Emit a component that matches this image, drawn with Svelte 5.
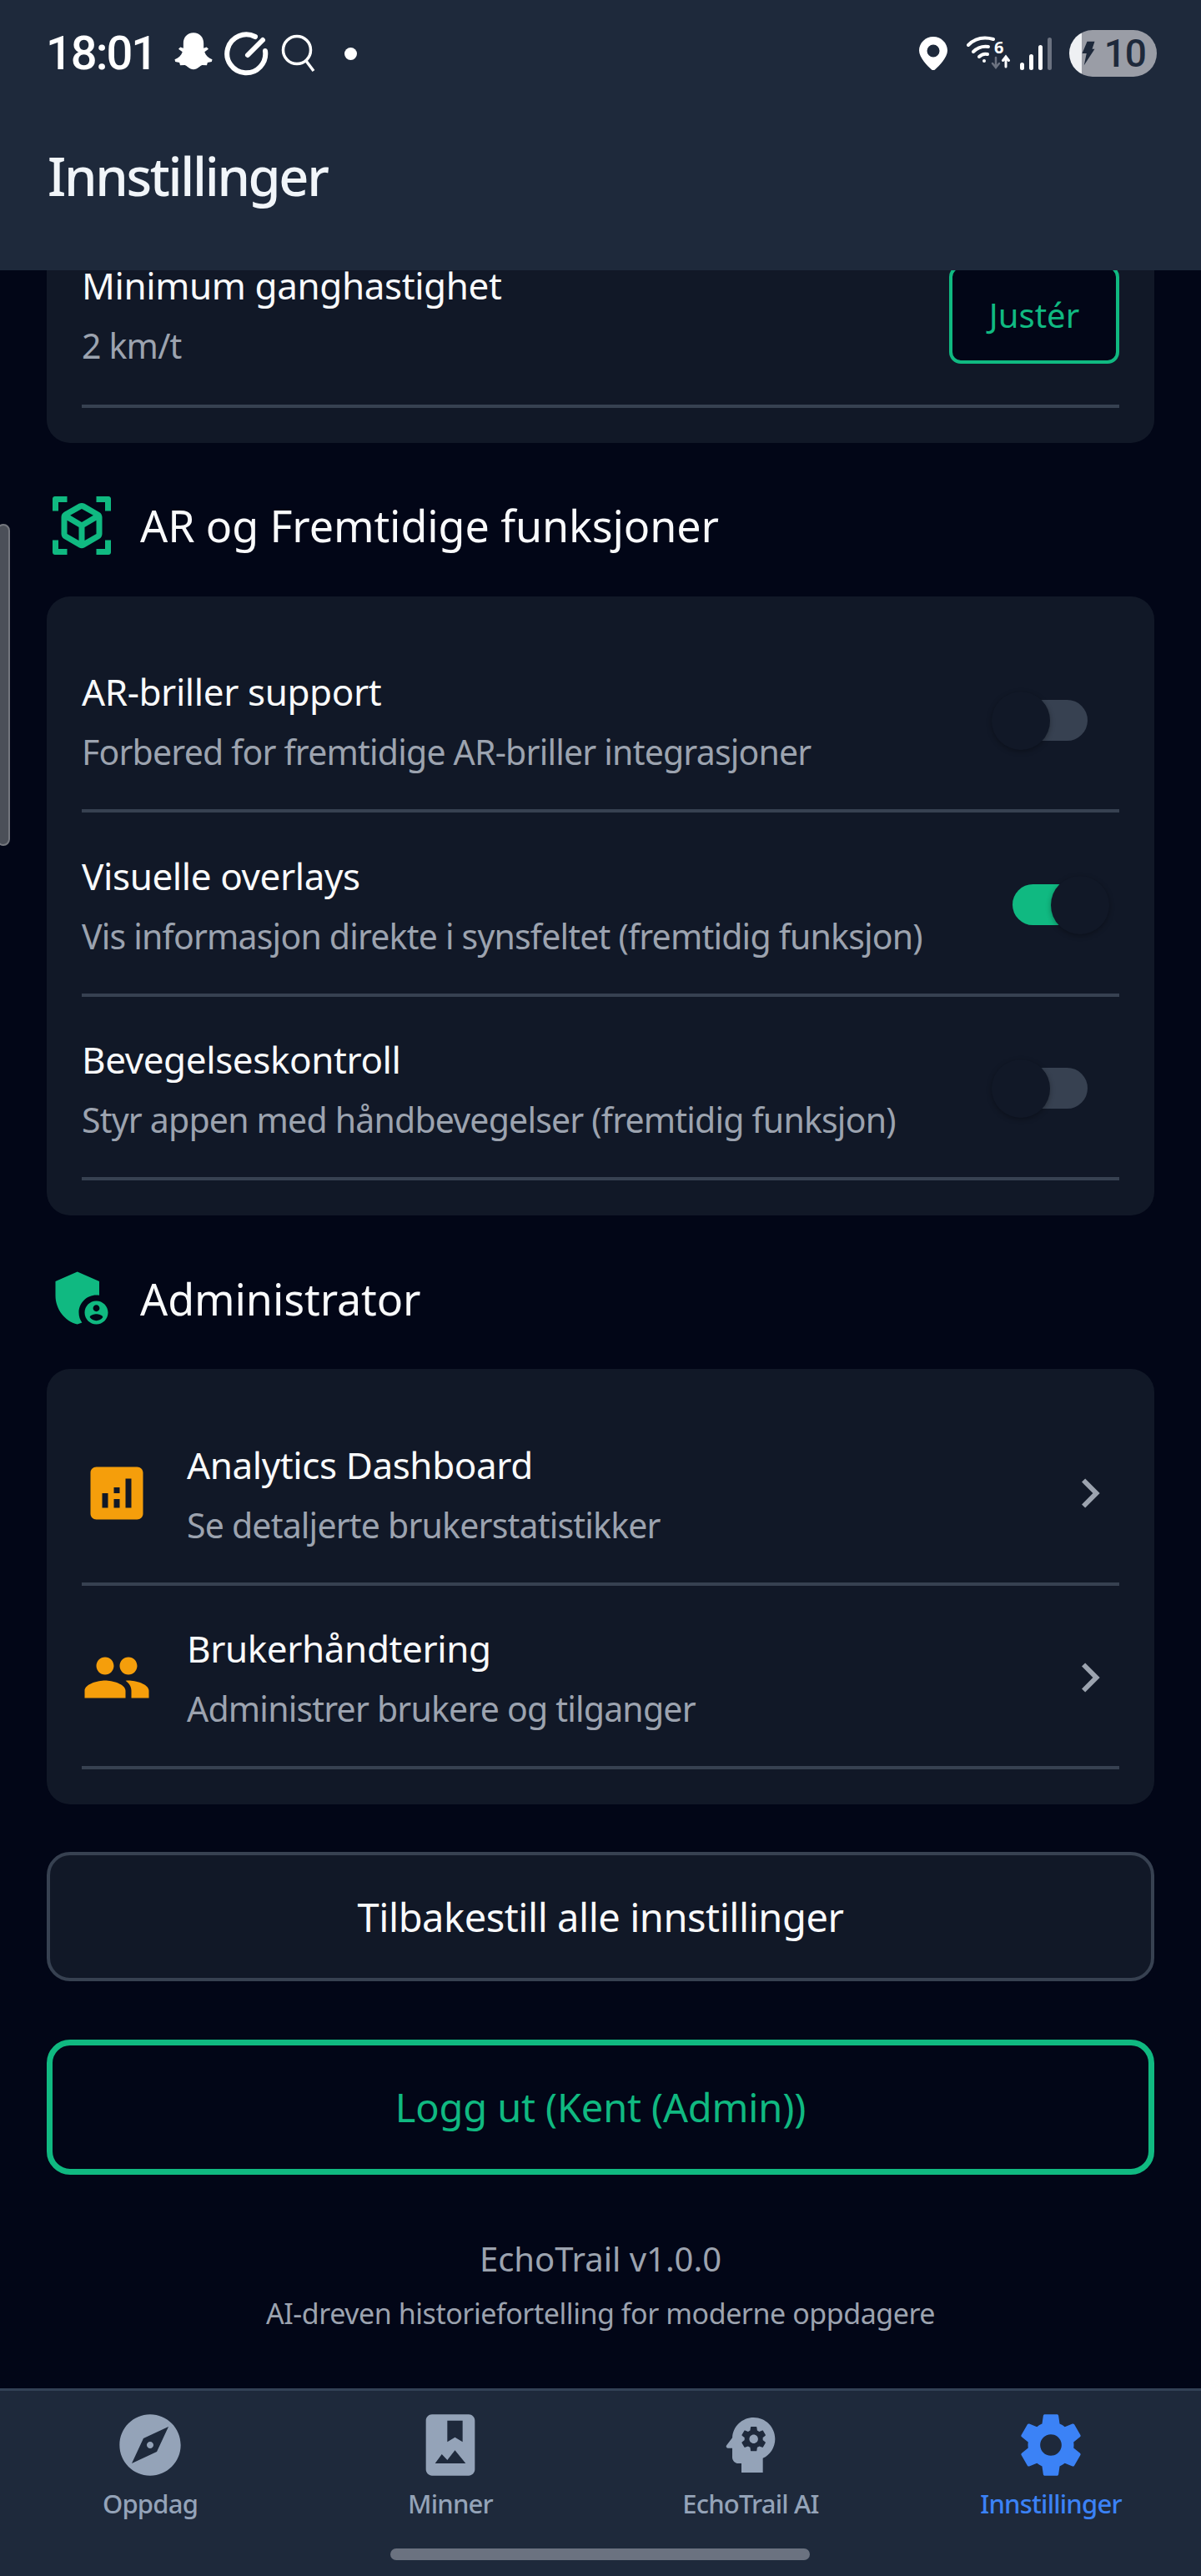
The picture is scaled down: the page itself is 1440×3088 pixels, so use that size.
<script>
    const arRows = [
        { title: 'AR-briller support', sub: 'Forbered for fremtidige AR-briller integrasjoner', on: false },
        { title: 'Visuelle overlays', sub: 'Vis informasjon direkte i synsfeltet (fremtidig funksjon)', on: true },
        { title: 'Bevegelseskontroll', sub: 'Styr appen med håndbevegelser (fremtidig funksjon)', on: false }
    ];

    const icons = {
        analytics: 'M19 3H5c-1.1 0-2 .9-2 2v14c0 1.1.9 2 2 2h14c1.1 0 2-.9 2-2V5c0-1.1-.9-2-2-2zM9 17H7v-5h2v5zm4 0h-2v-3h2v3zm0-5h-2v-2h2v2zm4 5h-2V7h2v10z',
        people: 'M16 11c1.66 0 2.99-1.34 2.99-3S17.66 5 16 5c-1.66 0-3 1.34-3 3s1.34 3 3 3zm-8 0c1.66 0 2.99-1.34 2.99-3S9.66 5 8 5C6.34 5 5 6.34 5 8s1.34 3 3 3zm0 2c-2.33 0-7 1.17-7 3.5V19h14v-2.5c0-2.33-4.67-3.5-7-3.5zm8 0c-.29 0-.62.02-.97.05 1.16.84 1.97 1.97 1.97 3.45V19h6v-2.5c0-2.33-4.67-3.5-7-3.5z'
    };

    const adminRows = [
        { title: 'Analytics Dashboard', sub: 'Se detaljerte brukerstatistikker', icon: icons.analytics },
        { title: 'Brukerhåndtering', sub: 'Administrer brukere og tilganger', icon: icons.people }
    ];

    const tabs = [
        { label: 'Oppdag', d: 'M12 10.9c-.61 0-1.1.49-1.1 1.1s.49 1.1 1.1 1.1c.61 0 1.1-.49 1.1-1.1s-.49-1.1-1.1-1.1zM12 2C6.48 2 2 6.48 2 12s4.48 10 10 10 10-4.48 10-10S17.52 2 12 2zm2.19 12.19L6 18l3.81-8.19L18 6l-3.81 8.19z' },
        { label: 'Minner', d: 'M18 2H6c-1.1 0-2 .9-2 2v16c0 1.1.9 2 2 2h12c1.1 0 2-.9 2-2V4c0-1.1-.9-2-2-2zM11 4h5v7l-2.5-1.5L11 11V4zM7 18l2.2-3 1.8 1.9 2.5-3.2L17 18H7z' },
        { label: 'EchoTrail AI', d: 'M13 8.57c-.79 0-1.43.64-1.43 1.43s.64 1.43 1.43 1.43 1.43-.64 1.43-1.43-.64-1.43-1.43-1.43zM13 3C9.25 3 6.18 5.9 6.02 9.58L4.1 12.14c-.25.33 0 .86.4.86H6v3c0 1.1.9 2 2 2h1v3h7v-4.68c2.36-1.12 4-3.53 4-6.32 0-3.87-3.13-7-7-7zm3 7c0 .13-.01.26-.02.39l.83.66c.08.06.1.16.05.25l-.8 1.39c-.05.09-.16.12-.24.09l-.99-.4c-.21.16-.43.29-.67.39L14 13.83c-.01.1-.1.17-.2.17h-1.6c-.1 0-.18-.07-.2-.17l-.15-1.06c-.25-.1-.47-.23-.68-.39l-.99.4c-.09.03-.2 0-.25-.09l-.8-1.39c-.05-.08-.03-.19.05-.25l.84-.66c-.01-.13-.02-.26-.02-.39s.02-.27.04-.39l-.85-.66c-.08-.06-.1-.16-.05-.26l.8-1.38c.05-.09.15-.12.24-.09l1 .4c.2-.15.43-.29.67-.39L12 6.17c.02-.1.1-.17.2-.17h1.6c.1 0 .18.07.2.17l.15 1.06c.24.1.46.23.67.39l1-.4c.09-.03.2 0 .24.09l.8 1.38c.05.09.03.2-.05.26l-.85.66c.03.12.04.25.04.39z' },
        { label: 'Innstillinger', active: true, d: 'M19.43 12.98c.04-.32.07-.64.07-.98s-.03-.66-.07-.98l2.11-1.65c.19-.15.24-.42.12-.64l-2-3.46c-.12-.22-.39-.3-.61-.22l-2.49 1c-.52-.4-1.08-.73-1.69-.98l-.38-2.65C14.46 2.18 14.25 2 14 2h-4c-.25 0-.46.18-.49.42l-.38 2.65c-.61.25-1.17.59-1.69.98l-2.49-1c-.23-.09-.49 0-.61.22l-2 3.46c-.13.22-.07.49.12.64l2.11 1.65c-.04.32-.07.65-.07.98s.03.66.07.98l-2.11 1.65c-.19.15-.24.42-.12.64l2 3.46c.12.22.39.3.61.22l2.49-1c.52.4 1.08.73 1.69.98l.38 2.65c.03.24.24.42.49.42h4c.25 0 .46-.18.49-.42l.38-2.65c.61-.25 1.17-.59 1.69-.98l2.49 1c.23.09.49 0 .61-.22l2-3.46c.12-.22.07-.49-.12-.64l-2.11-1.65zM12 15.5c-1.93 0-3.5-1.57-3.5-3.5s1.57-3.5 3.5-3.5 3.5 1.57 3.5 3.5-1.57 3.5-3.5 3.5z' }
    ];
</script>

<div class="page">
    <header>
        <div class="status">
            <span class="time">18:01</span>
            <svg class="ghost" viewBox="0 0 24 24" fill="#fff"><path d="M12 1c3.4 0 5.400 2.500 5.400 5.600v2.600l1.600-.5 1 1-2.100 1.500c.6 1.900 2.100 3.300 4.100 4l-.3 1.200-2.200.5-.4 1.400-2.500-.1c-1.100.3-2.400 2.300-4.600 2.300s-3.500-2-4.600-2.300l-2.500.1-.4-1.400-2.200-.5-.3-1.200c2-.7 3.500-2.100 4.100-4L4 9.700l1-1 1.600.5V6.600C6.600 3.500 8.600 1 12 1z" /></svg>
            <svg class="ring" viewBox="0 0 54 54" fill="none" stroke="#fff" stroke-width="6" stroke-linecap="round"><path d="M38 7A23 23 0 1 0 50 24" /><path d="M29 29L47 11" /></svg>
            <svg class="lens" viewBox="0 0 46 46" fill="none" stroke="#fff" stroke-width="3.500"><circle cx="20" cy="19" r="16.500" /><path d="M31 32l9 12" /></svg>
            <span class="dot"></span>
            <span class="spacer"></span>
            <svg class="pin" viewBox="0 0 34 40"><path fill="#fff" fill-rule="evenodd" d="M17 0C7.600 0 0 7.500 0 16.500 0 25 10 35 15 39.500c1.200 1 2.800 1 4 0C24 35 34 25 34 16.500 34 7.500 26.400 0 17 0zm0 9.500a7.500 7.500 0 1 1 0 15 7.500 7.500 0 0 1 0-15z" /></svg>
            <svg class="wifi" viewBox="0 0 56 42" fill="none" stroke="#fff" stroke-width="4" stroke-linecap="round">
                <path d="M2 11C10 3 21 1 32 4" />
                <path d="M8 19c5-5 11-7 18-6" />
                <path d="M15 25c3-3 6-4 10-3" />
                <circle cx="21" cy="30" r="2" fill="#fff" stroke="none" />
                <path d="M35 26v11M31 33l4 5 4-5" stroke="#6b7280" stroke-width="2.500" />
                <path d="M47 37V26M43.500 29.500L47 25l3.500 4.500" stroke-width="3" />
                <text x="33" y="21" class="six" fill="#fff" stroke="none">6</text>
            </svg>
            <div class="bars">
                <span class="bar" style="height: 9px"></span>
                <span class="bar" style="height: 19px"></span>
                <span class="bar" style="height: 30px"></span>
                <span class="bar off" style="height: 39px"></span>
            </div>
            <div class="battery">
                <svg class="bolt" viewBox="0 0 20 40"><path fill="#1e293b" d="M8 1h12l-4 12h4L3 39l4-19H0z" /></svg>
                <span>10</span>
            </div>
        </div>
        <h1>Innstillinger</h1>
    </header>

    <div class="scroll">
        <main>
            <section class="card">
                <div class="row first">
                    <div class="text">
                        <div class="title">Minimum ganghastighet</div>
                        <div class="sub">2 km/t</div>
                    </div>
                    <button class="adjust">Justér</button>
                </div>
            </section>

            <div class="heading">
                <svg viewBox="0 0 24 24" fill="#10b981"><path d="M2.800 2H7v2H4v3H2V2.800c0-.4.4-.8.800-.8zM17 2h4.200c.4 0 .8.4.8.8V7h-2V4h-3V2zM2 17h2v3h3v2H2.800c-.4 0-.8-.4-.8-.8V17zM20 17h2v4.200c0 .4-.4.8-.8.8H17v-2h3v-3zM19 14.870V9.130c0-.72-.38-1.380-1-1.730l-5-2.880c-.31-.18-.65-.27-1-.27s-.69.09-1 .27L6 7.390c-.62.36-1 1.020-1 1.740v5.740c0 .72.38 1.380 1 1.730l5 2.880c.31.18.65.27 1 .27s.69-.09 1-.27l5-2.880c.62-.35 1-1.010 1-1.730zm-8 2.300l-4-2.300v-4.630l4 2.330v4.600zm1-6.330L8.040 8.530 12 6.250l3.960 2.280L12 10.840zm5 4.030l-4 2.300v-4.600l4-2.330v4.630z" /></svg>
                <h2>AR og Fremtidige funksjoner</h2>
            </div>

            <section class="card">
                {#each arRows as row}
                    <div class="row">
                        <div class="text">
                            <div class="title">{row.title}</div>
                            <div class="sub">{row.sub}</div>
                        </div>
                        <div class="switch" class:on={row.on}><span class="thumb"></span></div>
                    </div>
                {/each}
            </section>

            <div class="heading">
                <svg viewBox="0 0 24 24" fill="#10b981"><path d="M17 11c.34 0 .67.04 1 .09V6.270L10.500 3 3 6.270v4.910c0 4.540 3.200 8.790 7.500 9.820.55-.13 1.080-.32 1.600-.55-.69-.98-1.100-2.170-1.100-3.450 0-3.310 2.690-6 6-6z" /><path d="M17 13c-2.210 0-4 1.790-4 4s1.790 4 4 4 4-1.790 4-4-1.790-4-4-4zm0 1.380c.62 0 1.120.51 1.120 1.120s-.51 1.120-1.120 1.120-1.120-.51-1.120-1.120.5-1.120 1.120-1.120zm0 5.370c-.93 0-1.740-.46-2.240-1.170.05-.72 1.510-1.080 2.240-1.080s2.190.36 2.240 1.080c-.5.71-1.310 1.170-2.240 1.170z" /></svg>
                <h2>Administrator</h2>
            </div>

            <section class="card">
                {#each adminRows as row}
                    <div class="row">
                        <svg class="row-icon" viewBox="0 0 24 24" fill="#f59e0b"><path d={row.icon} /></svg>
                        <div class="text">
                            <div class="title">{row.title}</div>
                            <div class="sub">{row.sub}</div>
                        </div>
                        <svg class="chevron" viewBox="0 0 24 24" fill="#9ca3af"><path d="M10 6L8.590 7.410 13.170 12l-4.580 4.590L10 18l6-6z" /></svg>
                    </div>
                {/each}
            </section>

            <button class="reset">Tilbakestill alle innstillinger</button>
            <button class="logout">Logg ut (Kent (Admin))</button>

            <footer>
                <div class="version">EchoTrail v1.0.0</div>
                <div class="tagline">AI-dreven historiefortelling for moderne oppdagere</div>
            </footer>
        </main>
    </div>

    <nav>
        {#each tabs as tab}
            <div class="tab" class:active={tab.active}>
                <svg viewBox="0 0 24 24" fill="currentColor"><path fill-rule="evenodd" d={tab.d} /></svg>
                <span>{tab.label}</span>
            </div>
        {/each}
        <span class="home"></span>
    </nav>

    <span class="edge"></span>
</div>

<style>
    :global(body) {
        background: #020617;
    }

    .page {
        position: relative;
        display: flex;
        flex-direction: column;
        height: 3088px;
        overflow: hidden;
        font-family: "Noto Sans", "Open Sans", sans-serif;
        color: #f9fafb;
        background: #020617;
    }

    header {
        flex: none;
        height: 324px;
        background: #1e293b;
        box-sizing: border-box;
        position: relative;
        z-index: 1;
        overflow: hidden;
    }

    .status {
        display: flex;
        align-items: center;
        height: 56px;
        padding: 36px 53px 0 55px;
        color: #fff;
    }

    .time {
        font-family: Roboto, sans-serif;
        font-size: 56px;
        font-weight: 500;
        letter-spacing: -2px;
        width: 150px;
    }

    .ghost { width: 54px; height: 54px; margin-right: 9px; }
    .ring { width: 54px; height: 54px; margin-right: 14px; }
    .lens { width: 46px; height: 46px; }
    .dot { width: 15px; height: 15px; border-radius: 50%; background: #fff; margin-left: 31px; }
    .spacer { flex: 1; }
    .pin { width: 34px; height: 40px; margin-right: 21px; transform: translateX(2px); }
    .wifi { width: 56px; height: 42px; margin-right: 12px; transform: translateX(4px); }
    .six { font-family: "Noto Sans", sans-serif; font-size: 20px; font-weight: 700; }

    .bars {
        display: flex;
        align-items: flex-end;
        gap: 6px;
        height: 39px;
        margin-right: 21px;
    }

    .bar {
        width: 5px;
        border-radius: 2.500px;
        background: #fff;
    }

    .bar.off {
        background: #6b7280;
    }

    .battery {
        display: flex;
        align-items: center;
        justify-content: flex-end;
        position: relative;
        width: 105px;
        height: 56px;
        box-sizing: border-box;
        padding-right: 13px;
        border-radius: 28px;
        background: linear-gradient(90deg, #eef0f3 15px, #9a9da6 15px);
        color: #1e293b;
        font-family: Roboto, sans-serif;
        font-size: 46px;
        font-weight: 500;
        letter-spacing: -1px;
    }

    .bolt {
        position: absolute;
        left: 13px;
        top: 13px;
        width: 20px;
        height: 30px;
    }

    h1 {
        margin: 77px 0 0 57px;
        font-size: 63px;
        line-height: 84px;
        font-weight: 500;
        letter-spacing: -2.300px;
        color: #f1f5f9;
    }

    .scroll {
        flex: 1;
        min-height: 0;
        overflow: hidden;
    }

    main {
        display: flex;
        flex-direction: column;
        margin-top: -95px;
        padding: 0 56px;
    }

    .card {
        background: #111827;
        border-radius: 28px;
        padding: 39px 42px 42px;
    }

    .row {
        display: flex;
        align-items: center;
        height: 220.500px;
        box-sizing: border-box;
        border-bottom: 4px solid #374151;
    }

    .text {
        flex: 1;
        min-width: 0;
        padding-top: 7px;
    }

    .row.first .text {
        padding-top: 4px;
    }

    .title {
        font-size: 44px;
        line-height: 66px;
        letter-spacing: -0.400px;
        color: #f9fafb;
    }

    .sub {
        margin-top: 6px;
        font-size: 41px;
        line-height: 66px;
        letter-spacing: -0.800px;
        color: #9ca3af;
    }

    .adjust {
        width: 204px;
        height: 118px;
        margin-top: 2px;
        border: 4px solid #10b981;
        border-radius: 14px;
        background: #020617;
        color: #10b981;
        font: inherit;
        font-size: 40px;
        padding: 0;
    }

    .heading {
        display: flex;
        align-items: center;
        gap: 28px;
        margin: 57px 0 43px;
    }

    .heading svg {
        width: 84px;
        height: 84px;
        flex: none;
    }

    h2 {
        margin: 0;
        font-size: 52px;
        font-weight: 400;
        letter-spacing: -0.100px;
        color: #f9fafb;
    }

    .switch {
        position: relative;
        width: 90px;
        height: 49px;
        margin: 4px 38px 0 0;
        border-radius: 25px;
        background: #374151;
    }

    .switch.on {
        background: #10b981;
    }

    .thumb {
        position: absolute;
        left: -25px;
        top: -10px;
        width: 70px;
        height: 70px;
        border-radius: 50%;
        background: #111827;
        box-shadow: 0 2px 6px rgba(0, 0, 0, 0.3);
    }

    .switch.on .thumb {
        left: 46px;
    }

    .row-icon {
        width: 84px;
        height: 84px;
        flex: none;
        margin: 4px 42px 0 0;
    }

    .chevron {
        width: 70px;
        height: 70px;
        flex: none;
        margin-top: 4px;
    }

    .reset, .logout {
        display: block;
        width: 100%;
        box-sizing: border-box;
        font: inherit;
        font-size: 47px;
        padding: 0;
    }

    .reset {
        height: 155px;
        margin-top: 57px;
        border: 4px solid #374151;
        border-radius: 28px;
        background: #111827;
        color: #f9fafb;
        letter-spacing: -0.450px;
    }

    .logout {
        height: 162px;
        margin-top: 70px;
        border: 7px solid #10b981;
        border-radius: 28px;
        background: transparent;
        color: #10b981;
        letter-spacing: -0.150px;
    }

    footer {
        margin-top: 70px;
        text-align: center;
        color: #9ca3af;
    }

    .version {
        font-size: 40px;
        line-height: 62px;
    }

    .tagline {
        margin-top: 4px;
        font-size: 34px;
        line-height: 60px;
        letter-spacing: -0.450px;
    }

    nav {
        position: relative;
        flex: none;
        display: grid;
        grid-template-columns: repeat(4, 1fr);
        height: 225px;
        box-sizing: border-box;
        padding-top: 21px;
        border-top: 3px solid #334155;
        background: #1e293b;
    }

    .tab {
        display: flex;
        flex-direction: column;
        align-items: center;
        color: #94a3b8;
    }

    .tab.active {
        color: #3b82f6;
    }

    .tab svg {
        width: 88px;
        height: 88px;
    }

    .tab span {
        margin-top: 2px;
        font-size: 31px;
        line-height: 48px;
        font-weight: 500;
        letter-spacing: -0.800px;
    }

    .home {
        position: absolute;
        left: 468px;
        bottom: 19px;
        width: 503px;
        height: 14px;
        border-radius: 7px;
        background: #6b7280;
    }

    .edge {
        position: absolute;
        left: -4px;
        top: 628px;
        width: 12px;
        height: 382px;
        border: 2px solid #74777e;
        border-radius: 12px;
        background: #4b4f58;
    }
</style>
